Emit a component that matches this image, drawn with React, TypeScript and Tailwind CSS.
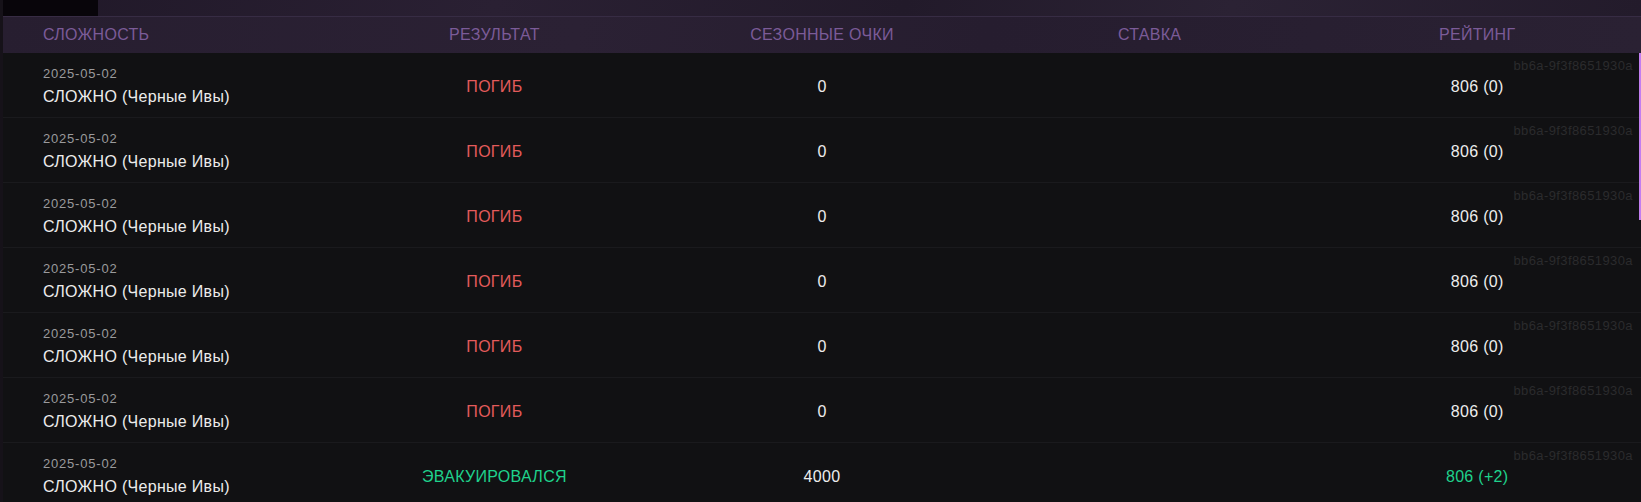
import React from "react";

type Row = {
  date: string;
  title: string;
  result: "dead" | "evac";
  points: string;
  rating: string;
  hash: string;
};

const rows: Row[] = [
  ...Array.from({ length: 6 }, () => ({
    date: "2025-05-02",
    title: "СЛОЖНО (Черные Ивы)",
    result: "dead" as const,
    points: "0",
    rating: "806 (0)",
    hash: "bb6a-9f3f8651930a",
  })),
  {
    date: "2025-05-02",
    title: "СЛОЖНО (Черные Ивы)",
    result: "evac",
    points: "4000",
    rating: "806 (+2)",
    hash: "bb6a-9f3f8651930a",
  },
];

const columns = ["СЛОЖНОСТЬ", "РЕЗУЛЬТАТ", "СЕЗОННЫЕ ОЧКИ", "СТАВКА", "РЕЙТИНГ"];

export default function App() {
  return (
    <div className="relative h-[502px] overflow-hidden bg-[#161219] font-['Liberation_Sans',Arial,sans-serif]">
      <div className="ml-[3px]">
        {/* top strip */}
        <div className="h-[17px] border-b border-[#372c44] bg-[linear-gradient(100deg,#201828_0%,#2a2033_30%,#221a2a_55%,#2b2234_75%,#231b2b_100%)]">
          <div className="h-[16px] w-[95px] bg-[#08050a]" />
        </div>

        {/* header */}
        <div className="grid h-[36px] grid-cols-5 items-center bg-[linear-gradient(100deg,#271e30_0%,#2b2134_35%,#261d2f_60%,#2a2133_100%)] text-[16px] tracking-[0.3px] text-[#7b5b98]">
          {columns.map((c, i) => (
            <div key={c} className={i === 0 ? "pl-[40px]" : "text-center"}>
              {c}
            </div>
          ))}
        </div>

        {/* rows */}
        {rows.map((r, idx) => (
          <div
            key={idx}
            className="relative grid h-[65px] grid-cols-5 items-center border-b border-[#1a1a1d] bg-[#111113] text-[16px] tracking-[0.3px]"
          >
            <span className="absolute right-[8px] top-[5px] text-[13px] leading-[15px] tracking-[0.4px] text-[#2b2b2d]">
              {r.hash}
            </span>
            <div className="pl-[40px] pt-[3px]">
              <div className="text-[13px] leading-[16px] tracking-[0.8px] text-[#9a9a9c]">{r.date}</div>
              <div className="mt-[4px] leading-[22px] text-[#ececec]">{r.title}</div>
            </div>
            <div
              className={
                "pt-[3px] text-center " +
                (r.result === "dead" ? "text-[#e35b5b]" : "text-[#1fd28c]")
              }
            >
              {r.result === "dead" ? "ПОГИБ" : "ЭВАКУИРОВАЛСЯ"}
            </div>
            <div className="pt-[3px] text-center text-[#ededed]">{r.points}</div>
            <div className="pt-[3px] text-center text-[#ededed]" />
            <div
              className={
                "pt-[3px] text-center " +
                (r.result === "dead" ? "text-[#ededed]" : "text-[#1fd28c]")
              }
            >
              {r.rating}
            </div>
          </div>
        ))}
      </div>

      {/* scrollbar thumb */}
      <div className="absolute right-0 top-[53px] h-[167px] w-[2px] bg-[#c27ef0]" />
    </div>
  );
}
